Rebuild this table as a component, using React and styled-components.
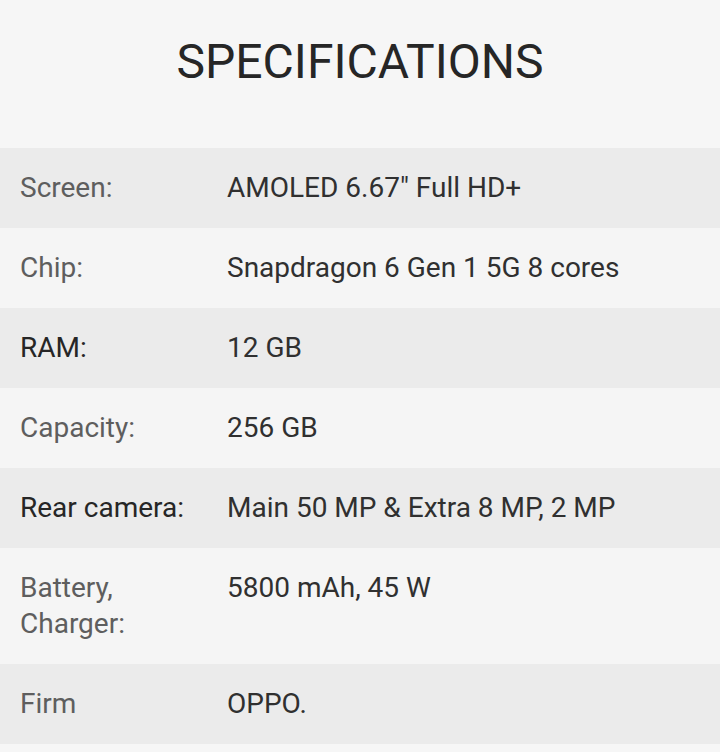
import React from 'react';
import styled, { createGlobalStyle } from 'styled-components';

const GlobalStyle = createGlobalStyle`
  body {
    margin: 0;
    background: #f6f6f6;
    font-family: Roboto, "Liberation Sans", sans-serif;
  }
`;

const specs = [
  { label: 'Screen:', value: 'AMOLED 6.67" Full HD+' },
  { label: 'Chip:', value: 'Snapdragon 6 Gen 1 5G 8 cores' },
  { label: 'RAM:', value: '12 GB', dark: true },
  { label: 'Capacity:', value: '256 GB' },
  { label: 'Rear camera:', value: 'Main 50 MP & Extra 8 MP, 2 MP', dark: true },
  { label: 'Battery,\nCharger:', value: '5800 mAh, 45 W' },
  { label: 'Firm', value: 'OPPO.' },
];

const Page = styled.div`
  width: 720px;
  height: 752px;
  overflow: hidden;
  background: #f6f6f6;
`;

const Title = styled.h1`
  margin: 0;
  padding: 30px 0 0;
  height: 148px;
  box-sizing: border-box;
  text-align: center;
  font-weight: 400;
  font-size: 48px;
  line-height: 64px;
  color: #262626;
`;

const Row = styled.div`
  display: grid;
  grid-template-columns: 207px 1fr;
  padding: 22px 20px;
  background: ${(p) => (p.$odd ? '#ebebeb' : '#f5f5f5')};
  font-size: 28px;
  line-height: 36px;
`;

const Label = styled.div`
  white-space: pre-line;
  color: ${(p) => (p.$dark ? '#262626' : '#5e5e5e')};
`;

const Value = styled.div`
  color: #303030;
`;

export default function App() {
  return (
    <Page>
      <GlobalStyle />
      <Title>SPECIFICATIONS</Title>
      {specs.map((s, i) => (
        <Row key={s.label} $odd={i % 2 === 0}>
          <Label $dark={s.dark}>{s.label}</Label>
          <Value>{s.value}</Value>
        </Row>
      ))}
    </Page>
  );
}
